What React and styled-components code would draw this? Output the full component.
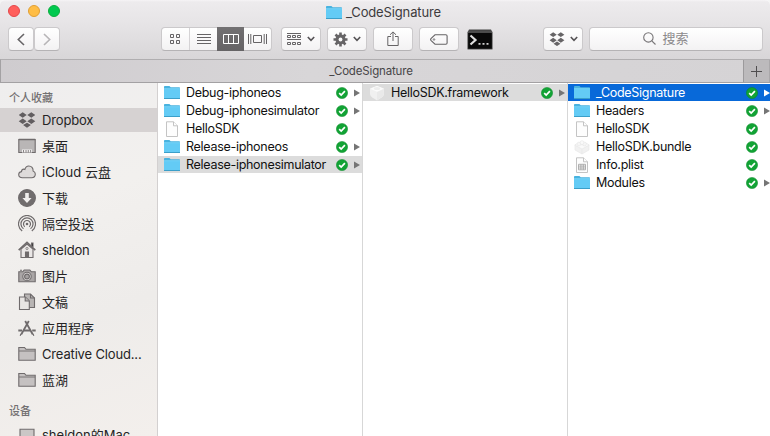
import React from "react";
import styled, { createGlobalStyle } from "styled-components";

const Global = createGlobalStyle`
  * { box-sizing: border-box; }
  body { margin: 0; background: #f5f5f5; overflow: hidden; }
  svg { display: block; flex: none; }
`;

const Window = styled.div`
  width: 770px;
  height: 436px;
  display: flex;
  flex-direction: column;
  overflow: hidden;
  background: #fff;
  border-radius: 5px 5px 0 0;
  font-family: Inter, "Noto Sans CJK SC", sans-serif;
  font-size: 12.5px;
  color: #1c1c1c;
  white-space: nowrap;
`;

const Header = styled.header`
  height: 59px;
  flex: none;
  background: linear-gradient(#f6f4f6 0, #edebed 2px, #e6e4e6 24px, #d8d6d8 59px);
`;

const TitleBar = styled.div`
  height: 27px;
  display: grid;
  grid-template-columns: 326px auto 1fr;
  align-items: center;
`;

const Lights = styled.div`
  display: flex;
  gap: 8px;
  padding: 0 0 5px 8px;
`;

const Light = styled.span`
  width: 12px;
  height: 12px;
  border-radius: 50%;
  background: ${(p) => p.$fill};
  border: 1px solid ${(p) => p.$edge};
`;

const Title = styled.div`
  display: flex;
  align-items: center;
  gap: 4px;
  height: 24px;
  margin-bottom: 3px;
  font-size: 13px;
  color: #3d3b3d;
`;

const Label = styled.span`
  display: block;
  letter-spacing: ${(p) => p.$spacing || 0}px;
`;

const Toolbar = styled.div`
  display: flex;
  align-items: center;
  height: 24px;
  padding-left: 8px;
`;

const Button = styled.div`
  display: flex;
  align-items: center;
  justify-content: center;
  gap: 5px;
  width: ${(p) => p.$width}px;
  height: 24px;
  margin-left: ${(p) => p.$before || 0}px;
  border: 1px solid #cbc9cb;
  border-bottom-color: #b5b3b5;
  border-radius: 4px;
  background: linear-gradient(#fff, #f3f2f3);
`;

const Segments = styled.div`
  display: flex;
  width: 111px;
  height: 24px;
  margin-left: 101px;
  border: 1px solid #cbc9cb;
  border-bottom-color: #b5b3b5;
  border-radius: 4px;
  background: linear-gradient(#fff, #f3f2f3);
`;

const Segment = styled.div`
  display: flex;
  align-items: center;
  justify-content: center;
  width: ${(p) => p.$width}px;
  margin: ${(p) => (p.$active ? "-1px 0" : "0")};
  background: ${(p) => (p.$active ? "linear-gradient(#727072, #656365)" : "none")};
  border-right: ${(p) => (p.$divided ? "1px solid #d5d3d5" : "0")};
`;

const TerminalSlot = styled.div`
  margin-left: 8px;
`;

const Search = styled(Button)`
  gap: 6px;
  font-size: 13px;
  line-height: 18px;
  color: #8b898b;
  padding: 0 20px 2px 0;
`;

const TabBar = styled.div`
  display: flex;
  flex: none;
  height: 24px;
  border: 1px solid #a3a1a3;
  border-top-color: #b0aeb0;
  border-right: 0;
  background: linear-gradient(90deg, #cfcccf, #d8d6d8 40%, #d5d3d5);
`;

const Tab = styled.div`
  flex: 1;
  display: flex;
  align-items: center;
  justify-content: center;
  padding-right: 2px;
  font-size: 11.5px;
  color: #474547;
`;

const NewTab = styled.div`
  display: flex;
  align-items: center;
  justify-content: center;
  width: 27px;
  background: #bcbabc;
  border-left: 1px solid #9c9a9c;
  border-right: 1px solid #aaa8aa;
`;

const Body = styled.main`
  flex: 1;
  min-height: 0;
  display: flex;
`;

const Sidebar = styled.aside`
  width: 158px;
  flex: none;
  overflow: hidden;
  border-right: 1px solid #d3d0d0;
  background: linear-gradient(160deg, #efeeee 0%, #f2f0ee 35%, #eeecea 65%, #f3efec 100%);
`;

const Heading = styled.div`
  height: ${(p) => p.$height}px;
  padding: ${(p) => p.$top || 0}px 0 0 9px;
  display: flex;
  align-items: center;
  font-size: 11px;
  font-weight: 500;
  color: #737071;
`;

const Place = styled.div`
  height: 24px;
  margin: 1px 0 2px;
  padding-left: 18px;
  display: grid;
  grid-template-columns: 24px 1fr;
  align-items: center;
  line-height: 18px;
  font-size: 13px;
  color: #252425;
  background: ${(p) => (p.$active ? "#d6d2d2" : "transparent")};
`;

const Column = styled.section`
  width: ${(p) => p.$width}px;
  flex: none;
  padding-top: 1px;
  border-right: ${(p) => (p.$last ? "0" : "1px solid #d7d7d7")};
`;

const Row = styled.div`
  height: 17px;
  margin-bottom: 1px;
  padding: 0 2px 0 6px;
  display: grid;
  grid-template-columns: 22px 1fr 12px 12px;
  align-items: center;
  line-height: 17px;
  color: ${(p) => (p.$tone === "focus" ? "#fff" : "#111")};
  background: ${(p) => ({ focus: "#0869d9", path: "#dcdcdc" })[p.$tone] || "#fff"};
`;

const ArrowCell = styled.span`
  display: flex;
  justify-content: flex-end;
`;

const Folder = () => (
  <svg width="16" height="15" viewBox="0 0 16 15">
    <path d="M0 2.2C0 1.5.3 1 1 1h4.4l1.3 1.2H15c.6 0 1 .4 1 1V14H0z" fill="#49b3df" />
    <path d="M0 4h16v9.5H0z" fill="#63cbf5" />
    <path d="M0 3.7h16" stroke="#82d9fb" strokeWidth=".8" />
    <path d="M0 13.5h16" stroke="#3b9fc9" />
  </svg>
);

const Doc = ({ table }) => (
  <svg width="16" height="16" viewBox="0 0 16 16" fill="#fdfdfd" stroke="#bdbdbd" strokeWidth=".9">
    <path d="M2.5.8h7l4 4v10.7h-11z" />
    <path d="M9.5.8v4h4" />
    {table && <path d="M4.5 7.3h7v5.5h-7zM4.5 9.1h7M4.5 11h7M6.9 7.3v5.5M9.3 7.3v5.5" stroke="#a0a0a0" strokeWidth=".8" />}
  </svg>
);

const Framework = () => (
  <svg width="16" height="16" viewBox="0 0 16 16">
    <path d="M1 3.5 8 .8l7 2.7v5.2c0 1.4-.8 2.6-2 3.5L8 15.4l-5-3.2c-1.2-.9-2-2.1-2-3.5z" fill="#f0f0f0" />
    <path d="m1.3 3.8 6.7 3 6.7-3L8 1z" fill="#fbfbfb" />
    <path d="M8 7.2v8l5-3.1c1.1-.9 1.8-2 1.8-3.3V4z" fill="#e9e9e9" />
    <ellipse cx="8" cy="3.6" rx="3.2" ry="1.5" fill="#ededed" />
  </svg>
);

const Bundle = () => (
  <svg width="16" height="16" viewBox="0 0 16 16" stroke="#e6e6e6" strokeWidth=".6">
    <path d="m1 6 7-3.5L15 6v5l-7 4-7-4z" fill="#f1f1f1" />
    <path d="m.8 6 3.4-2L8 6l3.8-2 3.4 2L8 10z" fill="#fafafa" />
    <circle cx="5" cy="5" r="1.9" fill="#f6f6f6" />
    <circle cx="10.5" cy="5" r="1.9" fill="#f6f6f6" />
    <circle cx="8" cy="3.6" r="1.9" fill="#fafafa" />
    <path d="M8 10v5" />
  </svg>
);

const Synced = () => (
  <svg width="12" height="12" viewBox="0 0 12 12">
    <circle cx="6" cy="6" r="5.6" fill="#12a335" stroke="#078a26" strokeWidth=".5" />
    <path d="m3.2 6.1 2 2 3.7-4" fill="none" stroke="#fff" strokeWidth="1.7" />
  </svg>
);

const Arrow = ({ color }) => (
  <svg width="6" height="8" viewBox="0 0 6 8">
    <path d="M0 .4 6 4 0 7.6z" fill={color} />
  </svg>
);

const Chevron = () => (
  <svg width="8" height="6" viewBox="0 0 8 6" fill="none" stroke="#555355" strokeWidth="1.6">
    <path d="M.8 1 4 4.3 7.2 1" />
  </svg>
);

const NavArrow = ({ flip, color }) => (
  <svg width="8" height="13" viewBox="0 0 8 13" fill="none" stroke={color} strokeWidth="1.6">
    <path d={flip ? "m1 1 5.7 5.5L1 12" : "M7 1 1.3 6.5 7 12"} />
  </svg>
);

const GridIcon = () => (
  <svg width="11" height="11" viewBox="0 0 11 11" fill="none" stroke="#666466" strokeWidth="1">
    <path d="M.5.5h3v3h-3zM6.5.5h3v3h-3zM.5 6.5h3v3h-3zM6.5 6.5h3v3h-3z" />
  </svg>
);

const ListIcon = () => (
  <svg width="14" height="10" viewBox="0 0 14 10" stroke="#666466">
    <path d="M0 .5h14M0 3.5h14M0 6.5h14M0 9.5h14" />
  </svg>
);

const ColumnsIcon = () => (
  <svg width="16" height="10" viewBox="0 0 16 10" fill="none" stroke="#fff">
    <path d="M.5.5h15v9H.5zM5.5.5v9M10.5.5v9" />
  </svg>
);

const CoverIcon = () => (
  <svg width="19" height="10" viewBox="0 0 19 10" fill="none" stroke="#666466">
    <path d="M.5 0v10M2.8 0v10M5.5 1.5h8v7h-8zM16.2 0v10M18.5 0v10" />
  </svg>
);

const ArrangeIcon = () => (
  <svg width="15" height="13" viewBox="0 0 15 13" fill="none" stroke="#666466">
    <path d="M0 .5h14M0 6.5h14M.5 2.5h3v2h-3zM5.5 2.5h3v2h-3zM10.5 2.5h3v2h-3zM.5 9.5h3v2h-3zM5.5 9.5h3v2h-3zM10.5 9.5h3v2h-3z" />
  </svg>
);

const GearIcon = () => (
  <svg width="15" height="15" viewBox="0 0 15 15">
    <g stroke="#666466" strokeWidth="2.6">
      <path d="M7.5.5v14M.5 7.5h14M2.5 2.5l10 10M12.5 2.5l-10 10" />
    </g>
    <circle cx="7.5" cy="7.5" r="5" fill="#666466" />
    <circle cx="7.5" cy="7.5" r="1.9" fill="#fafafa" />
  </svg>
);

const ShareIcon = () => (
  <svg width="12" height="16" viewBox="0 0 12 16" fill="none" stroke="#666466">
    <path d="M4 5.5H.8v9h10.4v-9H8M6 10V1M3 3.8 6 .9l3 2.9" />
  </svg>
);

const TagIcon = () => (
  <svg width="18" height="11" viewBox="0 0 18 11" fill="none" stroke="#666466" strokeWidth="1.1">
    <path d="M5 .8h10.8c.8 0 1.3.5 1.3 1.2v7c0 .7-.5 1.2-1.3 1.2H5L1.2 6.7c-.8-.8-.8-1.6 0-2.4z" />
    <circle cx="4" cy="5.5" r=".8" strokeWidth=".8" />
  </svg>
);

const TerminalIcon = () => (
  <svg width="26" height="21" viewBox="0 0 26 21">
    <path d="M2 .5h22l1.5 2.8H.5z" fill="#434343" />
    <path d="M.7 3.2h24.6v17H.7z" fill="#080808" stroke="#777" strokeWidth=".6" />
    <path d="m3.5 6.5 5 4.5-5 4.5" fill="none" stroke="#dedede" strokeWidth="2.2" />
    <path d="M11.5 14.8h2M15.5 14.8h2M19.5 14.8h2" stroke="#cfcfcf" strokeWidth="1.8" />
  </svg>
);

const DropboxIcon = ({ width = 18, color = "#625e60" }) => (
  <svg width={width} height={width * 16 / 18} viewBox="0 0 18 16" fill={color}>
    <path d="m4.7.3 4 2.7-4 2.7-4-2.7zM13.3.3l4 2.7-4 2.7-4-2.7zM4.7 6.6l4 2.7-4 2.7-4-2.7zM13.3 6.6l4 2.7-4 2.7-4-2.7zM9 10.7l3.9 2.4L9 15.8l-3.9-2.7z" />
  </svg>
);

const SearchIcon = () => (
  <svg width="13" height="13" viewBox="0 0 13 13" fill="none" stroke="#777577" strokeWidth="1.1">
    <circle cx="5.4" cy="5.4" r="4.7" />
    <path d="m8.8 8.8 3.7 3.7" />
  </svg>
);

const PlusIcon = () => (
  <svg width="11" height="11" viewBox="0 0 11 11" stroke="#4f4d4f">
    <path d="M5.5 0v11M0 5.5h11" />
  </svg>
);

const placeShapes = {
  desktop: (
    <>
      <path d="M.8 2.5h16.4v13H.8z" fill="#b9b6b6" />
      <path d="M.8 2.5h16.4" strokeWidth="1.6" />
      <path d="M4 12.5h10v3H4z" fill="#f3f1f1" stroke="none" />
      <path d="M5.5 13v2.5M8 13v2.5M10.3 13v2.5M12.6 13v2.5" strokeWidth=".8" />
    </>
  ),
  cloud: <path d="M4.5 14.8C2.2 14.8.7 13.5.7 11.6c0-1.7 1.2-2.8 2.8-3 0-1.6 1-2.5 2.2-2.5.5 0 .8.1 1.2.3C7.4 4.3 8.7 3 10.8 3c2.7 0 4.5 2 4.3 4.9 1.4.5 2.2 1.7 2.2 3.2 0 2.2-1.5 3.7-3.7 3.7z" fill="#dedbda" />,
  download: (
    <>
      <circle cx="9" cy="9" r="8.4" fill="#716d6e" />
      <path d="M7.2 4h3.6v5h2.8L9 14 4.4 9h2.8z" fill="#f1efee" stroke="none" />
    </>
  ),
  airdrop: (
    <>
      <path d="M4.2 16a8.5 8.5 0 1 1 9.6 0M5.5 13.8a6 6 0 1 1 7 0M6.8 11.7a3.5 3.5 0 1 1 4.4 0" fill="none" strokeWidth="1.2" />
      <path d="M9 8.2 6 16h6z" fill="#efedeb" stroke="none" />
      <circle cx="9" cy="9" r="1.3" fill="#6f6b6c" stroke="none" />
    </>
  ),
  home: (
    <>
      <path d="M13.5 5V2h1.5v4" />
      <path d="M3 8v8.5h12V8L9 3z" fill="#eae7e6" />
      <path d="M.7 9.2 9 1.4l8.3 7.8" fill="none" strokeWidth="1.7" />
      <path d="M7.5 11h3v5.5h-3z" fill="#6f6b6c" />
      <circle cx="9" cy="7.5" r="1.1" fill="none" strokeWidth=".7" />
    </>
  ),
  camera: (
    <>
      <path d="M.8 4.7h4L6.2 3h5.6l1.4 1.7h4v10H.8z" fill="#aaa6a6" />
      <path d="M2 3.2h2" />
      <circle cx="9" cy="9.5" r="4.2" fill="#dfdcdb" />
      <circle cx="9" cy="9.5" r="2.4" fill="#a5a1a1" />
    </>
  ),
  documents: (
    <>
      <path d="M6.5 1h6l4 4v9.5h-10z" fill="#b8b5b4" />
      <path d="M12.5 1v4h4" fill="none" />
      <path d="M1.5 4h5.8l4 4v8.5H1.5z" fill="#e8e5e3" />
      <path d="M7.2 4v4h4" fill="#b8b5b4" />
    </>
  ),
  apps: (
    <>
      <path d="M10.8 2 3.2 15.5M7.2 2l7.6 13.5" fill="none" strokeWidth="1.8" />
      <path d="M.3 11.5H4M6 11.5h6M14.2 11.5h3.5" strokeWidth="1.8" />
      <path d="m2.8 15-.6 1.8M15.2 15l.6 1.8" />
    </>
  ),
  folder: (
    <>
      <path d="M.8 15.3V2.5h5.7L8 4.3h9.2v11z" fill="#c5c1c1" />
      <path d="M1 6h16" strokeWidth=".9" />
    </>
  ),
  computer: (
    <>
      <path d="M2 3.3h14v10H2z" fill="#cbc7c6" />
      <path d="M0 14.8h18" />
    </>
  ),
};

const PlaceIcon = ({ kind }) =>
  kind === "dropbox" ? (
    <DropboxIcon />
  ) : (
    <svg width="18" height="18" viewBox="0 0 18 18" stroke="#6f6b6c" strokeWidth="1.1">
      {placeShapes[kind]}
    </svg>
  );

const places = [
  ["dropbox", "Dropbox"],
  ["desktop", "桌面"],
  ["cloud", "iCloud 云盘"],
  ["download", "下载"],
  ["airdrop", "隔空投送"],
  ["home", "sheldon"],
  ["camera", "图片"],
  ["documents", "文稿"],
  ["apps", "应用程序"],
  ["folder", "Creative Cloud..."],
  ["folder", "蓝湖"],
];

const columns = [
  {
    width: 205,
    rows: [
      { icon: Folder, name: "Debug-iphoneos", open: true },
      { icon: Folder, name: "Debug-iphonesimulator", open: true },
      { icon: Doc, name: "HelloSDK" },
      { icon: Folder, name: "Release-iphoneos", open: true },
      { icon: Folder, name: "Release-iphonesimulator", open: true, tone: "path" },
    ],
  },
  {
    width: 205,
    rows: [{ icon: Framework, name: "HelloSDK.framework", open: true, tone: "path" }],
  },
  {
    width: 204,
    rows: [
      { icon: Folder, name: "_CodeSignature", open: true, tone: "focus" },
      { icon: Folder, name: "Headers", open: true },
      { icon: Doc, name: "HelloSDK" },
      { icon: Bundle, name: "HelloSDK.bundle" },
      { icon: Doc, name: "Info.plist", table: true },
      { icon: Folder, name: "Modules", open: true },
    ],
  },
];

const FileRow = ({ icon: Icon, name, open, tone, table }) => (
  <Row $tone={tone}>
    <Icon table={table} />
    <Label $spacing={-0.29}>{name}</Label>
    <Synced />
    <ArrowCell>{open && <Arrow color={tone === "focus" ? "#fff" : "#757575"} />}</ArrowCell>
  </Row>
);

export default function App() {
  return (
    <>
      <Global />
      <Window>
        <Header>
          <TitleBar>
            <Lights>
              <Light $fill="#ff5f5c" $edge="#e4474a" />
              <Light $fill="#ffbd45" $edge="#e09e33" />
              <Light $fill="#00c94f" $edge="#0bad3e" />
            </Lights>
            <Title>
              <Folder />
              <Label $spacing={-0.14}>_CodeSignature</Label>
            </Title>
          </TitleBar>
          <Toolbar>
            <Button $width={26}><NavArrow color="#666466" /></Button>
            <Button $width={26}><NavArrow flip color="#b7b5b7" /></Button>
            <Segments>
              <Segment $width={28} $divided><GridIcon /></Segment>
              <Segment $width={27}><ListIcon /></Segment>
              <Segment $width={27} $active><ColumnsIcon /></Segment>
              <Segment $width={27}><CoverIcon /></Segment>
            </Segments>
            <Button $width={40} $before={9}><ArrangeIcon /><Chevron /></Button>
            <Button $width={40} $before={6}><GearIcon /><Chevron /></Button>
            <Button $width={40} $before={6}><ShareIcon /></Button>
            <Button $width={40} $before={6}><TagIcon /></Button>
            <TerminalSlot><TerminalIcon /></TerminalSlot>
            <Button $width={40} $before={50}><DropboxIcon width={16} color="#666466" /><Chevron /></Button>
            <Search $width={174} $before={6}><SearchIcon /><Label>搜索</Label></Search>
          </Toolbar>
        </Header>
        <TabBar>
          <Tab><Label $spacing={-0.16}>_CodeSignature</Label></Tab>
          <NewTab><PlusIcon /></NewTab>
        </TabBar>
        <Body>
          <Sidebar>
            <Heading $height={24} $top={3}>个人收藏</Heading>
            {places.map(([kind, name], i) => (
              <Place key={name} $active={i === 0}>
                <PlaceIcon kind={kind} />
                <Label $spacing={/^[\x00-\x7f]+$/.test(name) ? -0.16 : 0}>{name}</Label>
              </Place>
            ))}
            <Heading $height={28} $top={4}>设备</Heading>
            <Place>
              <PlaceIcon kind="computer" />
              <Label>sheldon的Mac</Label>
            </Place>
          </Sidebar>
          {columns.map((column, i) => (
            <Column key={i} $width={column.width} $last={i === 2}>
              {column.rows.map((row) => <FileRow key={row.name} {...row} />)}
            </Column>
          ))}
        </Body>
      </Window>
    </>
  );
}
